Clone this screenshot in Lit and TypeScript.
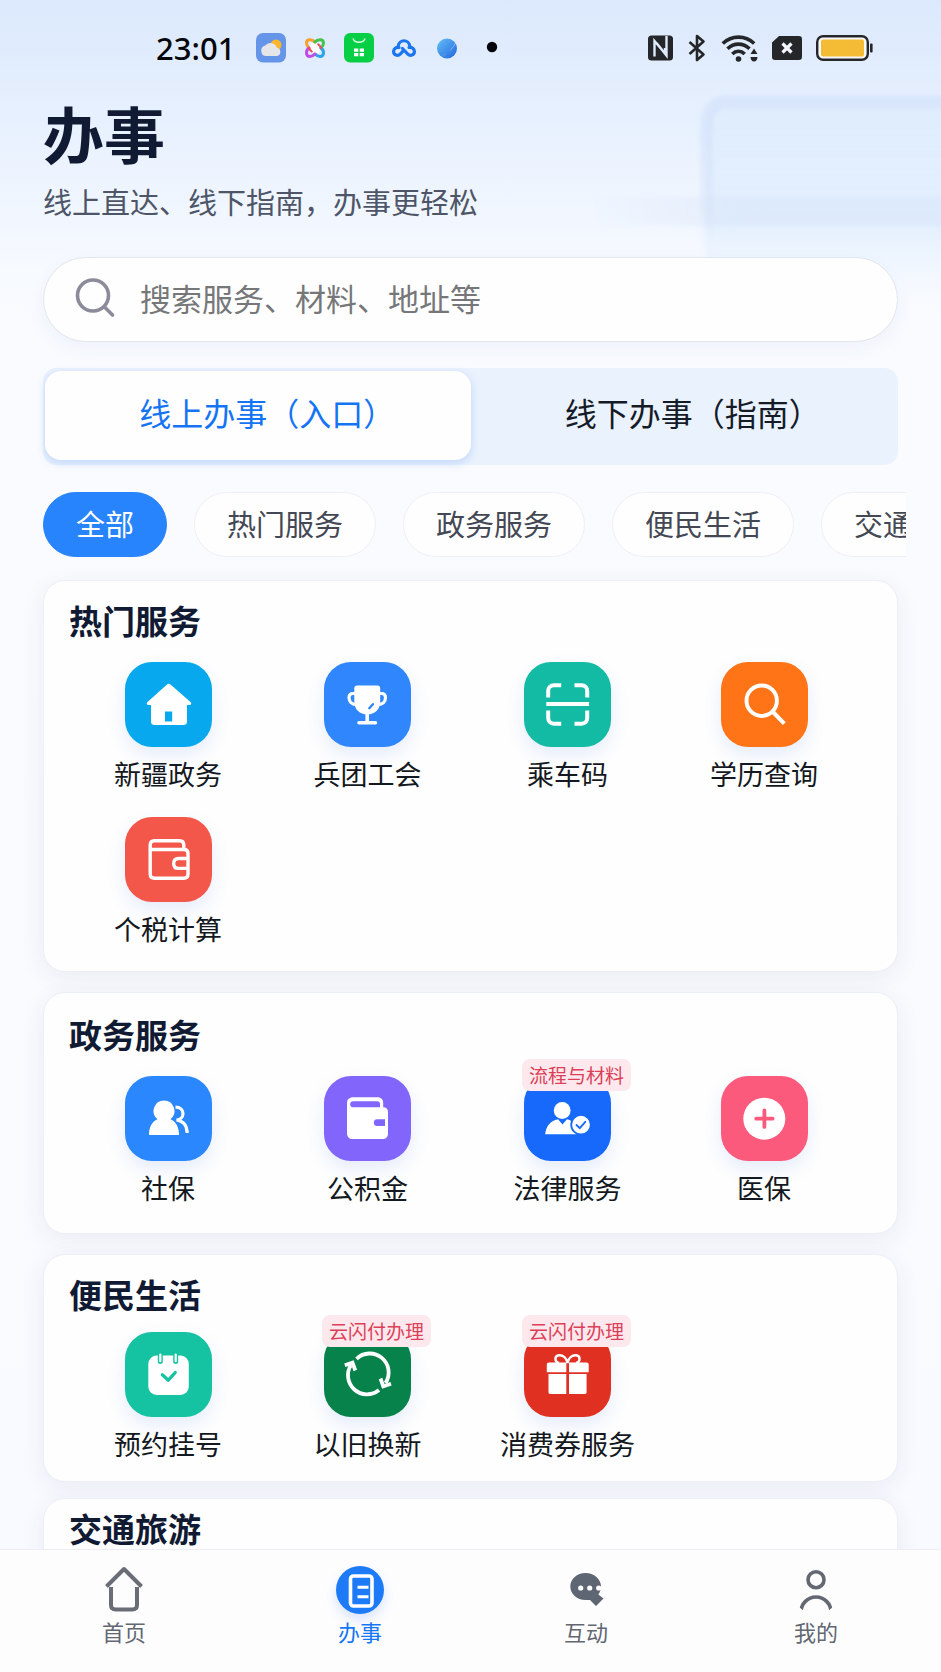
import { LitElement, html, svg, css, nothing, type TemplateResult } from "lit";
import { customElement, property, state } from "lit/decorators.js";
import { classMap } from "lit/directives/class-map.js";

const serviceIcons: Record<string, TemplateResult> = {
  house: svg`
    <path fill="#fff" fill-rule="evenodd" d="M42 22.400 22.500 40c-1.400 1.300-.7 3 1 3H26v16.500C26 62 27.300 63 29.500 63h29c2.200 0 3.500-1 3.500-3.500V43h2.500c1.700 0 2.400-1.700 1-3L45.500 22.400c-1.100-1-2.400-1-3.500 0ZM40 49.500h7.200V59.500H40Z"/>`,
  trophy: svg`
    <path fill="#fff" d="M33 23.500h20.500c1.700 0 2.700 1 2.700 2.700V40c0 7.500-5.700 12.500-13 12.500S30.300 47.500 30.300 40V26.200c0-1.700 1-2.700 2.700-2.700Z"/>
    <g fill="none" stroke="#fff" stroke-width="3.200" stroke-linecap="round">
      <path d="M31 31.500h-2c-2.500 0-4 1.600-4 4 0 4.500 3 7 7 7"/>
      <path d="M55.500 31.500h2c2.500 0 4 1.600 4 4 0 4.500-3 7-7 7"/>
      <path stroke-width="3.600" d="M43.200 51v9M35 60.800h16.500"/>
      <path stroke="#2f86fd" stroke-width="2.400" d="m45.300 46.200 3.600-4"/>
    </g>`,
  walletLine: svg`
    <g fill="none" stroke="#fff" stroke-width="3.400" stroke-linejoin="round">
      <path d="M25.200 32.500V28c0-2.800 1.600-4.300 4.300-4.300h25c2.700 0 4.300 1.500 4.300 4.300v4.500"/>
      <path d="M25.200 32.500H59c2.500 0 4 1.500 4 4V57c0 2.700-1.400 4.200-4.200 4.200H29.500c-2.800 0-4.300-1.500-4.300-4.200Z"/>
      <path d="M63 41.500H53.500c-3 0-4.800 1.900-4.800 4.900s1.800 5 4.800 5H63"/>
    </g>`,
  scan: svg`
    <g fill="none" stroke="#fff" stroke-width="4">
      <path d="M24.200 35.500V29c0-3.500 2.300-5.700 5.800-5.700h7.200M50.500 23.300h7c3.500 0 5.700 2.200 5.700 5.700v6.500M63.200 48.500V56c0 3.500-2.200 5.700-5.700 5.700h-7M37.200 61.700H30c-3.500 0-5.800-2.200-5.800-5.700v-7.500M22.300 42h42.800"/>
    </g>`,
  search: svg`
    <g fill="none" stroke="#fff" stroke-width="4">
      <circle cx="40.700" cy="38.700" r="15.200"/><path d="m51.500 49.500 11.800 12.200"/>
    </g>`,
  people: svg`
    <path fill="#fff" d="M39 24.500a10.500 10.500 0 0 1 6.500 18.700C51 45.500 54 51 54 59H24c0-8 3-13.500 8.500-15.800A10.500 10.500 0 0 1 39 24.500Z"/>
    <path fill="none" stroke="#fff" stroke-width="3.200" d="M50.500 31.200c4.500 0 7.500 2.600 7.500 6.300 0 3.400-2.700 6.300-6.500 6.500 6.500.8 10.400 5 10.700 13"/>`,
  wallet: svg`
    <path fill="#fff" fill-rule="evenodd" d="M29 21.300h24.500c3.500 0 5.700 2.200 5.700 5.700v4.300c3 0 4.800 1.700 4.800 4.700v21.500c0 3.500-2 5.500-5.500 5.500H28.700c-3.500 0-5.700-2-5.700-5.500V27c0-3.500 2.500-5.700 6-5.700ZM29 25.300c-1.800 0-2.800 1.200-2.800 3s1 3 2.800 3h27V28c0-1.800-1-2.700-2.700-2.700ZM53 43.300c-2 0-3.200 1.400-3.200 3.400S51 50 53 50h8v-6.700Z"/>`,
  lawyer: svg`
    <circle cx="38.200" cy="34.500" r="8.400" fill="#fff"/>
    <path fill="#fff" d="M34 43.200 38.500 48.500 43 43.200c5 1 8.500 4.500 9.500 15.100H21.200C22 50 26.500 44.500 34 43.200Z"/>
    <circle cx="57" cy="48.700" r="9.800" fill="#fff" stroke="#1769fc" stroke-width="1.800"/>
    <path fill="none" stroke="#1769fc" stroke-width="1.800" stroke-linecap="round" d="m52.500 49 3.300 3.200 5.500-6.400"/>`,
  medical: svg`
    <circle cx="43.300" cy="42.700" r="21" fill="#fff"/>
    <path fill="none" stroke="#fb5a7c" stroke-width="3.800" stroke-linecap="round" d="M35.200 42.700h16.400M43.400 34.500v16.400"/>`,
  calendar: svg`
    <rect x="23.300" y="23.500" width="40.500" height="39.500" rx="8.500" fill="#fff"/>
    <g fill="none" stroke-linecap="round">
      <path stroke="#15c2a1" stroke-width="5" d="M35.300 22v7.500M50.700 22v7.500"/>
      <path stroke="#fff" stroke-width="2.200" d="M35.300 22.500v6.700M50.700 22.500v6.700"/>
      <path stroke="#15c2a1" stroke-width="3.200" stroke-linejoin="round" d="m37.300 42.800 6 5.400 7-7.700"/>
    </g>`,
  refresh: svg`
    <g fill="none" stroke="#fff" stroke-width="3.800">
      <path d="M32.500 26.800A19 19 0 0 1 61.500 51M55 58A19 19 0 0 1 27 33"/>
      <path d="m20.800 33.200 7.700-2.500 2.800 7.800M67 51.800l-7.700 2.500-2.800-7.800"/>
    </g>`,
  gift: svg`
    <g fill="#fff">
      <path d="M25 30.500h17.300v9.800H22.800v-7.600c0-1.400.8-2.200 2.200-2.200ZM45 30.500h17.500c1.400 0 2.200.8 2.200 2.200v7.600H45ZM24.500 41.900h17.800v20H26.200c-1.100 0-1.700-.6-1.700-1.700ZM45 41.900h17.600v18.300c0 1.100-.6 1.700-1.700 1.700H45Z"/>
    </g>
    <path fill="none" stroke="#fff" stroke-width="2.400" d="M43.500 31c-1-5-4.500-8-8.500-7.700-5 .4-4.500 6.700 0 7.700M43.500 31c1-5 4.500-8 8.500-7.700 5 .4 4.500 6.700 0 7.700"/>`,
};

interface Service {
  name: string;
  icon: string;
  color: string;
  tag?: string;
}

interface Group {
  title: string;
  spacing: string;
  items: Service[];
}

const groups: Group[] = [
  {
    title: "热门服务",
    spacing: "regular",
    items: [
      { name: "新疆政务", icon: "house", color: "#07a8ee" },
      { name: "兵团工会", icon: "trophy", color: "#2f86fd" },
      { name: "乘车码", icon: "scan", color: "#14bba4" },
      { name: "学历查询", icon: "search", color: "#fe7416" },
      { name: "个税计算", icon: "walletLine", color: "#f2574a" },
    ],
  },
  {
    title: "政务服务",
    spacing: "roomy",
    items: [
      { name: "社保", icon: "people", color: "#2b87fd" },
      { name: "公积金", icon: "wallet", color: "#8265fb" },
      { name: "法律服务", icon: "lawyer", color: "#1769fc", tag: "流程与材料" },
      { name: "医保", icon: "medical", color: "#fb5a7c" },
    ],
  },
  {
    title: "便民生活",
    spacing: "tight",
    items: [
      { name: "预约挂号", icon: "calendar", color: "#15c2a1" },
      { name: "以旧换新", icon: "refresh", color: "#07824a", tag: "云闪付办理" },
      { name: "消费券服务", icon: "gift", color: "#e03022", tag: "云闪付办理" },
    ],
  },
  { title: "交通旅游", spacing: "compact", items: [] },
];

@customElement("status-bar")
class StatusBar extends LitElement {
  static styles = css`
    :host {
      display: flex;
      justify-content: space-between;
      align-items: center;
      box-sizing: border-box;
      height: 88px;
      padding: 8px 68px 0 156px;
      font-family: "Noto Sans", "Noto Sans CJK SC", sans-serif;
    }
    .side {
      display: flex;
      align-items: center;
      gap: 18px;
    }
    .system {
      gap: 14px;
    }
    .time {
      margin-right: 3px;
      font-size: 31px;
      font-weight: 500;
      line-height: 36px;
      color: #05070c;
    }
    svg {
      display: block;
      flex: none;
    }
  `;

  render() {
    return html`
      <div class="side">
        <span class="time">23:01</span>
        <svg width="30" height="30" viewBox="0 0 30 30">
          <rect width="30" height="29.500" rx="7" fill="#6495e8" />
          <circle cx="20" cy="12" r="5.500" fill="#fbb62b" />
          <path fill="#e4e6ea" d="M10 23a5.300 5.300 0 0 1-.8-10.400 6.800 6.800 0 0 1 11.800 2.200A4.200 4.200 0 0 1 21 23Z" />
        </svg>
        <svg width="22" height="22" viewBox="0 0 22 22" fill="none" stroke-width="3" stroke-linecap="round">
          <path fill="#fff" stroke="none" d="M7 6h8l2 5-2 5H7l-2-5Z" />
          <path stroke="#f7a02e" d="M11 5C8.500 2 2.500 1.500 2.500 6c0 2 1 3.500 2.500 5" />
          <path stroke="#46c24e" d="M11 5C13.500 2 19.500 1.500 19.500 6c0 2-1 3.500-2.500 5" />
          <path stroke="#2ba5ea" d="M17 11c3.500 2.500 3.500 8.500-1 8.500-2 0-3.500-1-5-2.500" />
          <path stroke="#c04be8" d="M5 11c-3.500 2.500-3.500 8.500 1 8.500 2 0 3.500-1 5-2.500" />
          <path stroke="#ef4c5c" stroke-width="2" d="M5 11c.8 1.800 1.600 2.600 2.800 3.600M17 11c-.8-1.800-1.600-2.800-2.800-3.800" />
        </svg>
        <svg width="30" height="30" viewBox="0 0 30 30">
          <rect width="30" height="29.500" rx="6" fill="#06cf45" />
          <path fill="none" stroke="#d9ffe4" stroke-width="1.400" d="M9 5.500c1.500 5 10.500 5 12 0" />
          <path fill="#fff" d="M10 15.500h4.300v3.300H10ZM15.700 15.500H20v3.300h-4.300ZM10 20h4.300v3.300H10ZM15.700 20H20v3.300h-4.300Z" />
        </svg>
        <svg width="24" height="20" viewBox="0 0 24 20" fill="none" stroke="#1b74f0" stroke-width="3.200" stroke-linecap="round">
          <path d="M6.300 7.500a5.800 5.800 0 0 1 11.400 0" />
          <path d="M17 9.500c3-.5 5.400 1.300 5.400 4 0 3.700-4.200 5-6.600 2.600L10.500 10.500" />
          <path d="M7 9.500c-3-.5-5.400 1.300-5.400 4 0 3.700 4.200 5 6.600 2.600l2.500-2.700" />
        </svg>
        <svg width="26" height="26" viewBox="0 0 26 26">
          <defs>
            <linearGradient id="globe" x1="0" y1="0" x2="1" y2="1">
              <stop offset="0" stop-color="#64c0f7" /><stop offset="1" stop-color="#2265dc" />
            </linearGradient>
          </defs>
          <circle cx="13" cy="13.500" r="10" fill="url(#globe)" />
          <path fill="#b8dcfa" d="M3.500 22.500C12 21 20 13 22.500 4.500 22.500 11 12 21.500 3.500 22.500Z" />
        </svg>
        <svg width="28" height="28" viewBox="0 0 28 28"><circle cx="14" cy="13" r="5.200" fill="#05070c" /></svg>
      </div>
      <div class="side system">
        <svg width="25" height="26" viewBox="0 0 25 26">
          <rect y=".5" width="25" height="25" rx="3.500" fill="#24262a" />
          <path fill="none" stroke="#dfebfb" stroke-width="2.400" d="M6.500 21.500V6l10.500 12.500V13M18.500 1v19.500L8.500 8" />
        </svg>
        <svg width="20" height="28" viewBox="0 0 20 28" fill="none" stroke="#24262a" stroke-width="2.600" stroke-linejoin="round">
          <path d="m2.500 8 14 12.500L10 26V2l6.500 5.500L2.500 20" />
        </svg>
        <svg width="37" height="30" viewBox="0 0 37 30" fill="none" stroke="#24262a" stroke-width="3.600">
          <path d="M1.800 10.500c9-8.500 22.400-8.500 31.400 0M6.500 15.800c6.500-6.200 15.500-6.200 22 0M11.300 21c3.700-3.600 8.700-3.600 12.400 0" />
          <circle cx="17.500" cy="26" r="2.800" fill="#24262a" stroke="none" />
          <path fill="#24262a" stroke="none" d="M33 15.500 36.500 21h-7ZM29.500 24h7c0 2.700-1.500 4.500-3.500 4.500S29.500 26.700 29.500 24Z" />
        </svg>
        <svg width="30" height="26" viewBox="0 0 30 26">
          <path fill="#24262a" d="M7 1h20c2 0 3 1 3 3v18c0 2-1 3-3 3H3c-2 0-3-1-3-3V7.500Z" />
          <path fill="none" stroke="#f2f7ff" stroke-width="3.200" d="m10.500 8.500 9 9M19.500 8.500l-9 9" />
        </svg>
        <svg width="57" height="28" viewBox="0 0 57 28">
          <rect x="1.200" y="2.200" width="50.600" height="23.600" rx="6" fill="#f6f8fb" stroke="#24262a" stroke-width="2.400" />
          <rect x="5" y="5.500" width="43" height="17" rx="2" fill="#f4bc34" />
          <rect x="54" y="9.500" width="2.600" height="9" rx="1" fill="#24262a" />
        </svg>
      </div>
    `;
  }
}

@customElement("service-card")
class ServiceCard extends LitElement {
  @property({ attribute: false }) group!: Group;

  static styles = css`
    :host {
      display: block;
      font-family: "Noto Sans CJK SC", sans-serif;
    }
    .card {
      box-sizing: border-box;
      padding: 19px 36px 24px 25px;
      border: 1px solid #eceff6;
      border-radius: 22px;
      background: #fefefe;
      box-shadow: 0 6px 24px rgba(38, 50, 98, 0.07);
    }
    .roomy {
      padding-top: 21px;
      padding-bottom: 27px;
    }
    .tight {
      padding-bottom: 19px;
    }
    .compact {
      padding-top: 9px;
      padding-bottom: 120px;
    }
    .title {
      margin: 0 0 22px;
      font-size: 33px;
      font-weight: 700;
      line-height: 40px;
      color: #111a33;
    }
    .tight .title {
      margin-bottom: 18px;
    }
    .grid {
      display: grid;
      grid-template-columns: 198fr 201fr 199fr 194fr;
      row-gap: 25px;
    }
    .item {
      display: flex;
      flex-direction: column;
      align-items: center;
      gap: 9px;
      text-decoration: none;
      color: #141821;
    }
    .tile {
      position: relative;
      width: 87px;
      height: 85px;
      border-radius: 27px;
      background: var(--tile-color);
      box-shadow: 0 8px 18px rgba(52, 104, 220, 0.12);
    }
    .tile svg {
      display: block;
    }
    .tag {
      position: absolute;
      top: -17px;
      left: -2px;
      padding: 0 7px;
      border-radius: 8px;
      background: #fde9ed;
      font-size: 19px;
      line-height: 32px;
      white-space: nowrap;
      color: #dc3f58;
    }
    .name {
      font-size: 27px;
      line-height: 36px;
      white-space: nowrap;
    }
  `;

  render() {
    const { title, spacing, items } = this.group;
    return html`
      <section class=${classMap({ card: true, [spacing]: true })}>
        <h2 class="title">${title}</h2>
        <div class="grid">
          ${items.map(
            (item) => html`
              <a class="item" href="#">
                <span class="tile" style="--tile-color:${item.color}">
                  <svg width="87" height="85" viewBox="0 0 87 85" aria-hidden="true">${serviceIcons[item.icon]}</svg>
                  ${item.tag ? html`<span class="tag">${item.tag}</span>` : nothing}
                </span>
                <span class="name">${item.name}</span>
              </a>
            `
          )}
        </div>
      </section>
    `;
  }
}

@customElement("bottom-nav")
class BottomNav extends LitElement {
  static styles = css`
    :host {
      display: block;
      font-family: "Noto Sans CJK SC", sans-serif;
    }
    .bar {
      display: grid;
      grid-template-columns: 236fr 236fr 216fr 244fr;
      padding: 16px 3px 26px 6px;
      border-top: 1px solid #eceef4;
      background: #fdfdfe;
    }
    .link {
      display: flex;
      flex-direction: column;
      align-items: center;
      gap: 2px;
      font-size: 22px;
      line-height: 30px;
      text-decoration: none;
      color: #626772;
    }
    .active {
      color: #1677f5;
    }
    .icon {
      display: block;
      border-radius: 50%;
    }
    .active .icon {
      background: #1e7bf8;
      box-shadow: 0 6px 12px rgba(30, 100, 240, 0.16);
    }
  `;

  render() {
    return html`
      <nav class="bar">
        <a class="link" href="#">
          <svg class="icon" width="48" height="48" viewBox="0 0 48 48" fill="none" stroke="#6a6d76" stroke-width="4" stroke-linejoin="round">
            <path d="M6.500 20.500 24 3l17.500 17.500" />
            <path d="M11 21v18c0 3 1.500 4.500 4.500 4.500h17c3 0 4.500-1.500 4.500-4.500V21" />
          </svg>
          首页
        </a>
        <a class="link active" href="#" aria-current="page">
          <svg class="icon" width="48" height="48" viewBox="0 0 48 48" fill="none" stroke="#fff">
            <rect x="14.500" y="10" width="21.500" height="30" rx="3" stroke-width="3.600" />
            <path stroke-width="3" d="M21.500 21.300h11M21.500 30.700h11" />
          </svg>
          办事
        </a>
        <a class="link" href="#">
          <svg class="icon" width="48" height="48" viewBox="0 0 48 48">
            <path fill="#5e6573" d="M23.500 7C32 7 39 13 39 20.500c0 3-1 5.800-2.700 8l5.200 4-7.500 7.500-6-6H23.500C15 34 8.300 28 8.300 20.500S15 7 23.500 7Z" />
            <g fill="#fff"><circle cx="18.700" cy="22" r="2.600" /><circle cx="27.700" cy="22" r="2.600" /><circle cx="36.700" cy="22" r="2.600" /></g>
          </svg>
          互动
        </a>
        <a class="link" href="#">
          <svg class="icon" width="48" height="48" viewBox="0 0 48 48" fill="none" stroke="#636873" stroke-width="3.600">
            <circle cx="24" cy="13.700" r="8" /><path d="M9 47.500V46a15 15 0 0 1 30 0v1.500" />
          </svg>
          我的
        </a>
      </nav>
    `;
  }
}

@customElement("app-root")
class AppRoot extends LitElement {
  @state() private tab = 0;
  @state() private filter = 0;

  private filters = ["全部", "热门服务", "政务服务", "便民生活", "交通旅游"];
  private tabs = ["线上办事（入口", "线下办事（指南"];

  static styles = css`
    :host {
      position: relative;
      display: flex;
      flex-direction: column;
      height: 100vh;
      overflow: hidden;
      background: linear-gradient(180deg, #dbe9fc 0, #e8f1fe 130px, #f7faff 270px, #fafbfe 420px, #f8faff 100%);
      font-family: "Noto Sans CJK SC", sans-serif;
    }
    .backdrop {
      position: absolute;
      top: 0;
      right: 0;
      width: 380px;
      height: 320px;
    }
    .content {
      position: relative;
      flex: 1;
      min-height: 0;
      padding: 9px 43px 0;
      overflow: hidden;
    }
    .heading {
      margin: 0;
      font-size: 61px;
      font-weight: 700;
      line-height: 72px;
      color: #111a33;
    }
    .intro {
      margin: 12px 0 36px;
      font-size: 29px;
      line-height: 40px;
      color: #4e5568;
    }
    .search {
      display: flex;
      align-items: center;
      box-sizing: border-box;
      height: 85px;
      padding: 0 30px 4px;
      gap: 24px;
      border: 1px solid #e3e6ee;
      border-radius: 43px;
      background: #fefefe;
      box-shadow: 0 6px 18px rgba(60, 90, 160, 0.05);
    }
    .search svg {
      flex: none;
    }
    .field {
      flex: 1;
      min-width: 0;
      padding: 0;
      border: 0;
      outline: 0;
      background: none;
      font: 31px/44px "Noto Sans CJK SC", sans-serif;
      color: #1a2030;
    }
    .field::placeholder {
      color: #767779;
      opacity: 1;
    }
    .tabs {
      display: grid;
      grid-template-columns: 1fr 1fr;
      box-sizing: border-box;
      height: 97px;
      margin-top: 26px;
      padding: 3px 2px 5px;
      border-radius: 14px;
      background: #eaf2fd;
    }
    .tab {
      padding: 0 0 7px 3px;
      border: 0;
      border-radius: 16px;
      background: none;
      font: 32px/48px "Noto Sans CJK SC", sans-serif;
      color: #161b28;
    }
    .tab.on {
      background: #fefefe;
      box-shadow: 0 3px 10px rgba(40, 120, 240, 0.22);
      color: #1474f4;
    }
    .half {
      font-feature-settings: "halt";
    }
    .chips {
      display: flex;
      gap: 27px;
      margin: 27px -8px 23px 0;
      overflow: hidden;
    }
    .chip {
      flex: none;
      box-sizing: border-box;
      height: 65px;
      padding: 0 32px 4px;
      border: 1px solid #eef0f5;
      border-radius: 33px;
      background: #fefefe;
      font: 29px/40px "Noto Sans CJK SC", sans-serif;
      color: #444854;
    }
    .chip.on {
      border-color: #2784fc;
      background: #2784fc;
      color: #fff;
    }
    .cards {
      display: flex;
      flex-direction: column;
      gap: 20px;
    }
    .cards :last-child {
      margin-top: -4px;
    }
    bottom-nav {
      position: relative;
    }
  `;

  render() {
    return html`
      <svg class="backdrop" viewBox="0 0 380 320" aria-hidden="true">
        <defs>
          <filter id="soft" x="-20%" y="-20%" width="140%" height="140%"><feGaussianBlur stdDeviation="2" /></filter>
          <linearGradient id="panel" x1="0" y1="0" x2="0" y2="1">
            <stop offset="0" stop-color="#d6e8fc" stop-opacity=".4" /><stop offset=".6" stop-color="#d6e8fc" stop-opacity=".5" />
            <stop offset="1" stop-color="#e2f0fe" stop-opacity="0" />
          </linearGradient>
          <linearGradient id="edge" gradientUnits="userSpaceOnUse" x1="0" y1="95" x2="0" y2="255">
            <stop offset="0" stop-color="#c8daf8" stop-opacity=".45" /><stop offset=".7" stop-color="#ccdcf8" stop-opacity=".3" />
            <stop offset="1" stop-color="#dfe8fa" stop-opacity="0" />
          </linearGradient>
          <linearGradient id="band" x1="0" y1="0" x2="1" y2="0">
            <stop offset="0" stop-color="#d5e2f7" stop-opacity=".05" /><stop offset=".4" stop-color="#d3e2f8" stop-opacity=".4" />
            <stop offset="1" stop-color="#d3e2f8" stop-opacity=".4" />
          </linearGradient>
        </defs>
        <g filter="url(#soft)">
          <path fill="url(#panel)" d="M145 300V122c0-9 6-14 15-14h240v192Z" />
          <path fill="none" stroke="url(#edge)" stroke-width="13" d="M145.500 255V124c0-14 8-22 22-22H400" />
          <rect x="34" y="197" width="365" height="29" fill="url(#band)" />
        </g>
      </svg>
      <status-bar></status-bar>
      <main class="content">
        <h1 class="heading">办事</h1>
        <p class="intro">线上直达、线下指南，办事更轻松</p>
        <label class="search">
          <svg width="42" height="42" viewBox="0 0 42 42" fill="none" stroke="#8b8b9b" stroke-width="3.600" stroke-linecap="round" aria-hidden="true">
            <circle cx="19" cy="18.500" r="15.500" /><path d="m30.500 30 8 8" />
          </svg>
          <input class="field" type="search" aria-label="搜索" placeholder="搜索服务、材料、地址等" />
        </label>
        <div class="tabs" role="tablist">
          ${this.tabs.map(
            (name, i) => html`<button
              class=${classMap({ tab: true, on: i === this.tab })}
              role="tab"
              aria-selected=${i === this.tab}
              @click=${() => (this.tab = i)}
            >${name}<span class="half">）</span></button>`
          )}
        </div>
        <div class="chips">
          ${this.filters.map(
            (name, i) => html`<button
              class=${classMap({ chip: true, on: i === this.filter })}
              @click=${() => (this.filter = i)}
            >${name}</button>`
          )}
        </div>
        <div class="cards">
          ${groups.map((group) => html`<service-card .group=${group}></service-card>`)}
        </div>
      </main>
      <bottom-nav></bottom-nav>
    `;
  }
}
